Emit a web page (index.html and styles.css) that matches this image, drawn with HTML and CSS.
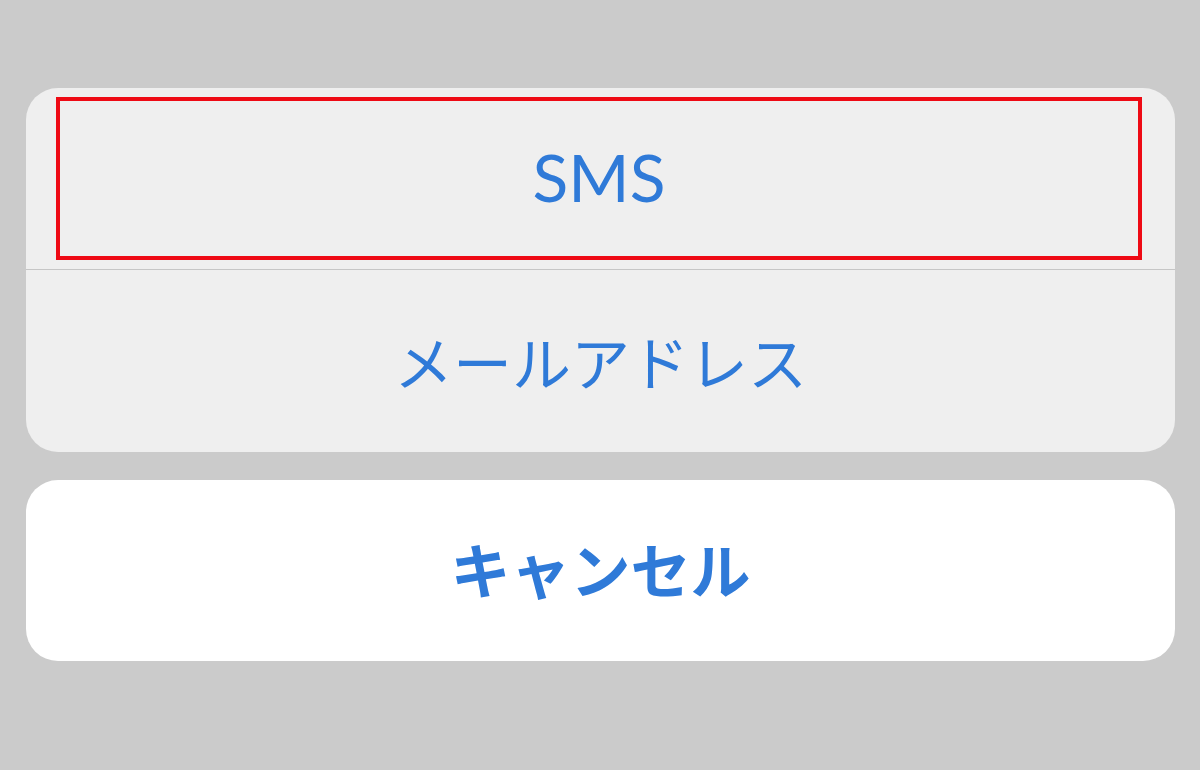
FILE: index.html
```html
<!DOCTYPE html>
<html lang="ja">
<head>
<meta charset="utf-8">
<title>Sheet</title>
<link rel="stylesheet" href="styles.css">
</head>
<body>
<div class="sheet">
  <div class="group">
    <div class="row row-first">
      <div class="highlight"><span class="label label-latin">SMS</span></div>
    </div>
    <div class="divider"></div>
    <div class="row row-second">
      <span class="label">メールアドレス</span>
    </div>
  </div>
  <div class="cancel">
    <span class="label label-bold">キャンセル</span>
  </div>
</div>
</body>
</html>
```

FILE: styles.css
```css
html, body {
  margin: 0;
  padding: 0;
}
body {
  width: 1200px;
  height: 770px;
  background: #cbcbcb;
  font-family: "Lato", "Noto Sans CJK JP", sans-serif;
  overflow: hidden;
}
.sheet {
  padding: 88px 25px 0 26px;
  display: flex;
  flex-direction: column;
  gap: 28px;
}
.group {
  background: #efefef;
  border-radius: 32px;
  display: flex;
  flex-direction: column;
  overflow: hidden;
}
.row {
  display: flex;
  align-items: center;
  justify-content: center;
}
.row-first {
  height: 181px;
  box-sizing: border-box;
  padding: 9px 33px 9px 30px;
  align-items: stretch;
}
.highlight {
  flex: 1;
  border: 4px solid #ee0a14;
  display: flex;
  align-items: center;
  justify-content: center;
  padding-bottom: 4px;
}
.divider {
  height: 1px;
  background: #c6c6c6;
}
.row-second {
  height: 182px;
  box-sizing: border-box;
  padding-bottom: 2px;
}
.cancel {
  background: #ffffff;
  border-radius: 32px;
  height: 181px;
  box-sizing: border-box;
  padding-bottom: 5px;
  display: flex;
  align-items: center;
  justify-content: center;
}
.label {
  color: #2f7ad8;
  font-family: "Noto Sans CJK JP", sans-serif;
  font-size: 59px;
  line-height: 1;
  font-weight: 400;
}
.label-latin {
  font-family: "Lato", sans-serif;
  font-size: 66px;
  font-weight: 400;
}
.label-bold {
  font-weight: 700;
  font-size: 60px;
}
```
